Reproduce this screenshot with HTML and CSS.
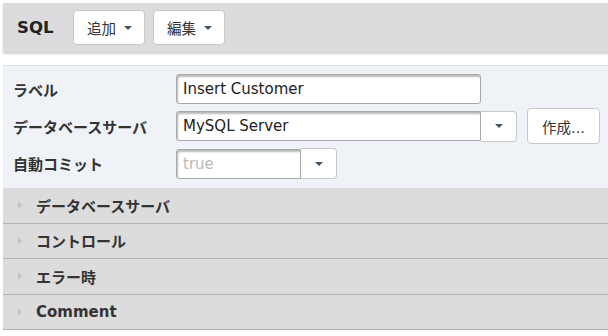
FILE: index.html
```html
<!DOCTYPE html>
<html>
<head>
<meta charset="utf-8">
<link rel="stylesheet" href="styles.css">
</head>
<body>
<div class="page">
  <div class="toolbar">
    <span class="title">SQL</span>
    <button class="tbtn">追加 <span class="caret"></span></button>
    <button class="tbtn">編集 <span class="caret"></span></button>
  </div>
  <div class="panel">
    <div class="row">
      <label class="lbl">ラベル</label>
      <div class="ctl"><div class="input wide">Insert Customer</div></div>
    </div>
    <div class="row">
      <label class="lbl">データベースサーバ</label>
      <div class="ctl">
        <div class="input wide joined">MySQL Server</div>
        <div class="drop"><span class="caret"></span></div>
        <button class="make">作成...</button>
      </div>
    </div>
    <div class="row">
      <label class="lbl">自動コミット</label>
      <div class="ctl">
        <div class="input short joined ph">true</div>
        <div class="drop"><span class="caret"></span></div>
      </div>
    </div>
  </div>
  <div class="sec"><span class="tri"></span>データベースサーバ</div>
  <div class="sec"><span class="tri"></span>コントロール</div>
  <div class="sec"><span class="tri"></span>エラー時</div>
  <div class="sec"><span class="tri"></span>Comment</div>
</div>
</body>
</html>
```
FILE: styles.css
```css
* { box-sizing: border-box; }
body {
  margin: 0;
  background: #fff;
  font-family: "DejaVu Sans", "Noto Sans CJK JP", sans-serif;
  color: #333;
  overflow: hidden;
}
.page {
  padding: 3px 0 0 3px;
  width: 620px;
}
.toolbar {
  height: 49px;
  background: #dcdcde;
  display: flex;
  align-items: center;
  padding-left: 14px;
  box-shadow: 0 2px 2px rgba(0,0,0,0.18);
}
.title {
  font-weight: bold;
  font-size: 16.5px;
  color: #222;
  margin-right: 20px;
}
.tbtn {
  height: 35px;
  width: 72px;
  margin-right: 8px;
  background: #fff;
  border: 1px solid #c8c8c8;
  border-radius: 4px;
  font-family: "DejaVu Sans", "Noto Sans CJK JP", sans-serif;
  font-size: 14.5px;
  color: #333;
  display: flex;
  align-items: center;
  justify-content: center;
  gap: 8px;
  padding: 0;
}
.caret {
  display: inline-block;
  width: 0;
  height: 0;
  border-left: 4.5px solid transparent;
  border-right: 4.5px solid transparent;
  border-top: 4.5px solid #3f5668;
}
.panel {
  margin-top: 13px;
  background: #eff2f7;
  border-top: 1px solid #dde1e7;
  padding: 8px 0 9px 0;
  display: flex;
  flex-direction: column;
  gap: 4px;
}
.row {
  display: flex;
  align-items: center;
}
.lbl {
  width: 173px;
  padding-left: 10px;
  font-weight: bold;
  font-size: 15px;
  color: #333;
}
.ctl {
  display: flex;
  align-items: center;
}
.input {
  height: 30px;
  background: #fff;
  border: 1px solid #a8a8a8;
  border-radius: 3px;
  box-shadow: inset 1px 2px 2px rgba(0,0,0,0.28);
  font-size: 15px;
  line-height: 28px;
  padding-left: 6px;
  color: #222;
}
.wide { width: 305px; }
.short { width: 125px; }
.joined { border-radius: 3px 0 0 3px; }
.ph { color: #bbb; }
.drop {
  width: 36px;
  height: 31px;
  background: #fff;
  border: 1px solid #c8c8c8;
  border-left: none;
  border-radius: 0 4px 4px 0;
  display: flex;
  align-items: center;
  justify-content: center;
}
.make {
  margin-left: 10px;
  width: 73px;
  height: 36px;
  background: #fff;
  border: 1px solid #c8c8c8;
  border-radius: 4px;
  font-family: "DejaVu Sans", "Noto Sans CJK JP", sans-serif;
  font-size: 14.5px;
  color: #333;
  padding: 0;
}
.sec {
  height: 35.5px;
  background: #dcdcdc;
  border-bottom: 1px solid #b3b3b3;
  display: flex;
  align-items: center;
  padding-left: 15px;
  font-weight: bold;
  font-size: 15px;
  color: #333;
}
.tri {
  width: 0;
  height: 0;
  border-top: 4px solid transparent;
  border-bottom: 4px solid transparent;
  border-left: 4px solid #c2c2c2;
  margin-right: 14px;
}
```
